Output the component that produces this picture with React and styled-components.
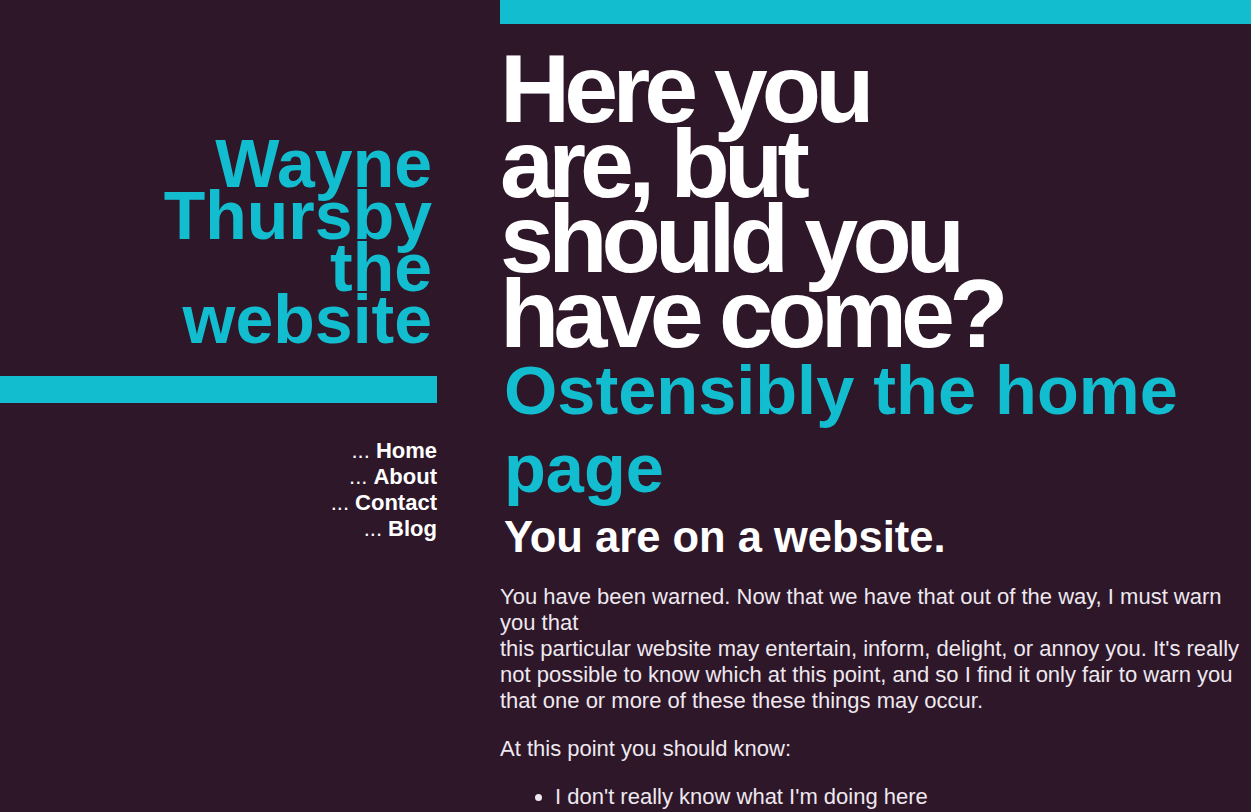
import React from 'react';
import styled, { createGlobalStyle } from 'styled-components';

const GlobalStyle = createGlobalStyle`
  html, body {
    margin: 0;
    padding: 0;
    background: #2d1729;
    font-family: "Liberation Sans", Arial, sans-serif;
  }
`;

const Page = styled.div`
  display: grid;
  grid-template-columns: 437px 1fr;
  column-gap: 63px;
  min-height: 100vh;
  background: #2d1729;
`;

const Sidebar = styled.aside`
  display: flex;
  flex-direction: column;
  padding-top: 137px;
`;

const SiteTitle = styled.h1`
  margin: 0;
  padding-right: 5px;
  text-align: right;
  font-size: 68px;
  line-height: 52px;
  font-weight: 700;
  color: #12bdd0;
`;

const Bar = styled.div`
  height: ${(p) => p.$height}px;
  background: #12bdd0;
`;

const SideBar = styled(Bar)`
  margin-top: 31px;
`;

const Nav = styled.nav`
  margin-top: 35px;
  display: flex;
  flex-direction: column;
  align-items: flex-end;
`;

const NavLink = styled.a`
  font-size: 22px;
  line-height: 26px;
  color: #ffffff;
  text-decoration: none;

  b {
    font-weight: 700;
  }
`;

const Main = styled.main`
  display: flex;
  flex-direction: column;
`;

const Headline = styled.h1`
  margin: 27px 0 0;
  font-size: 97px;
  line-height: 75px;
  letter-spacing: -5.8px;
  font-weight: 700;
  color: #ffffff;
`;

const SubHeading = styled.h2`
  margin: 1px 0 0 4px;
  font-size: 68.5px;
  line-height: 78px;
  font-weight: 700;
  color: #12bdd0;
`;

const Tagline = styled.h3`
  margin: 5px 0 0 4px;
  font-size: 43.5px;
  line-height: 49px;
  font-weight: 700;
  color: #ffffff;
`;

const Paragraph = styled.p`
  margin: 22px 0 0;
  font-size: 22px;
  line-height: 26px;
  color: #efe8ef;
`;

const List = styled.ul`
  margin: 22px 0 0;
  padding-left: 55px;
  font-size: 22px;
  line-height: 26px;
  color: #efe8ef;
`;

const navItems = ['Home', 'About', 'Contact', 'Blog'];

export default function App() {
  return (
    <>
      <GlobalStyle />
      <Page>
        <Sidebar>
          <SiteTitle>
            Wayne
            <br />
            Thursby
            <br />
            the
            <br />
            website
          </SiteTitle>
          <SideBar $height={27} />
          <Nav>
            {navItems.map((item) => (
              <NavLink key={item} href="#">
                ... <b>{item}</b>
              </NavLink>
            ))}
          </Nav>
        </Sidebar>

        <Main>
          <Bar $height={24} />
          <Headline>
            Here you
            <br />
            are, but
            <br />
            should you
            <br />
            have come?
          </Headline>
          <SubHeading>Ostensibly the home page</SubHeading>
          <Tagline>You are on a website.</Tagline>
          <Paragraph>
            You have been warned. Now that we have that out of the way, I must warn you that
            <br />
            this particular website may entertain, inform, delight, or annoy you. It's really
            not possible to know which at this point, and so I find it only fair to warn you
            that one or more of these these things may occur.
          </Paragraph>
          <Paragraph>At this point you should know:</Paragraph>
          <List>
            <li>I don't really know what I'm doing here</li>
            <li>This website is still under construction</li>
          </List>
        </Main>
      </Page>
    </>
  );
}
